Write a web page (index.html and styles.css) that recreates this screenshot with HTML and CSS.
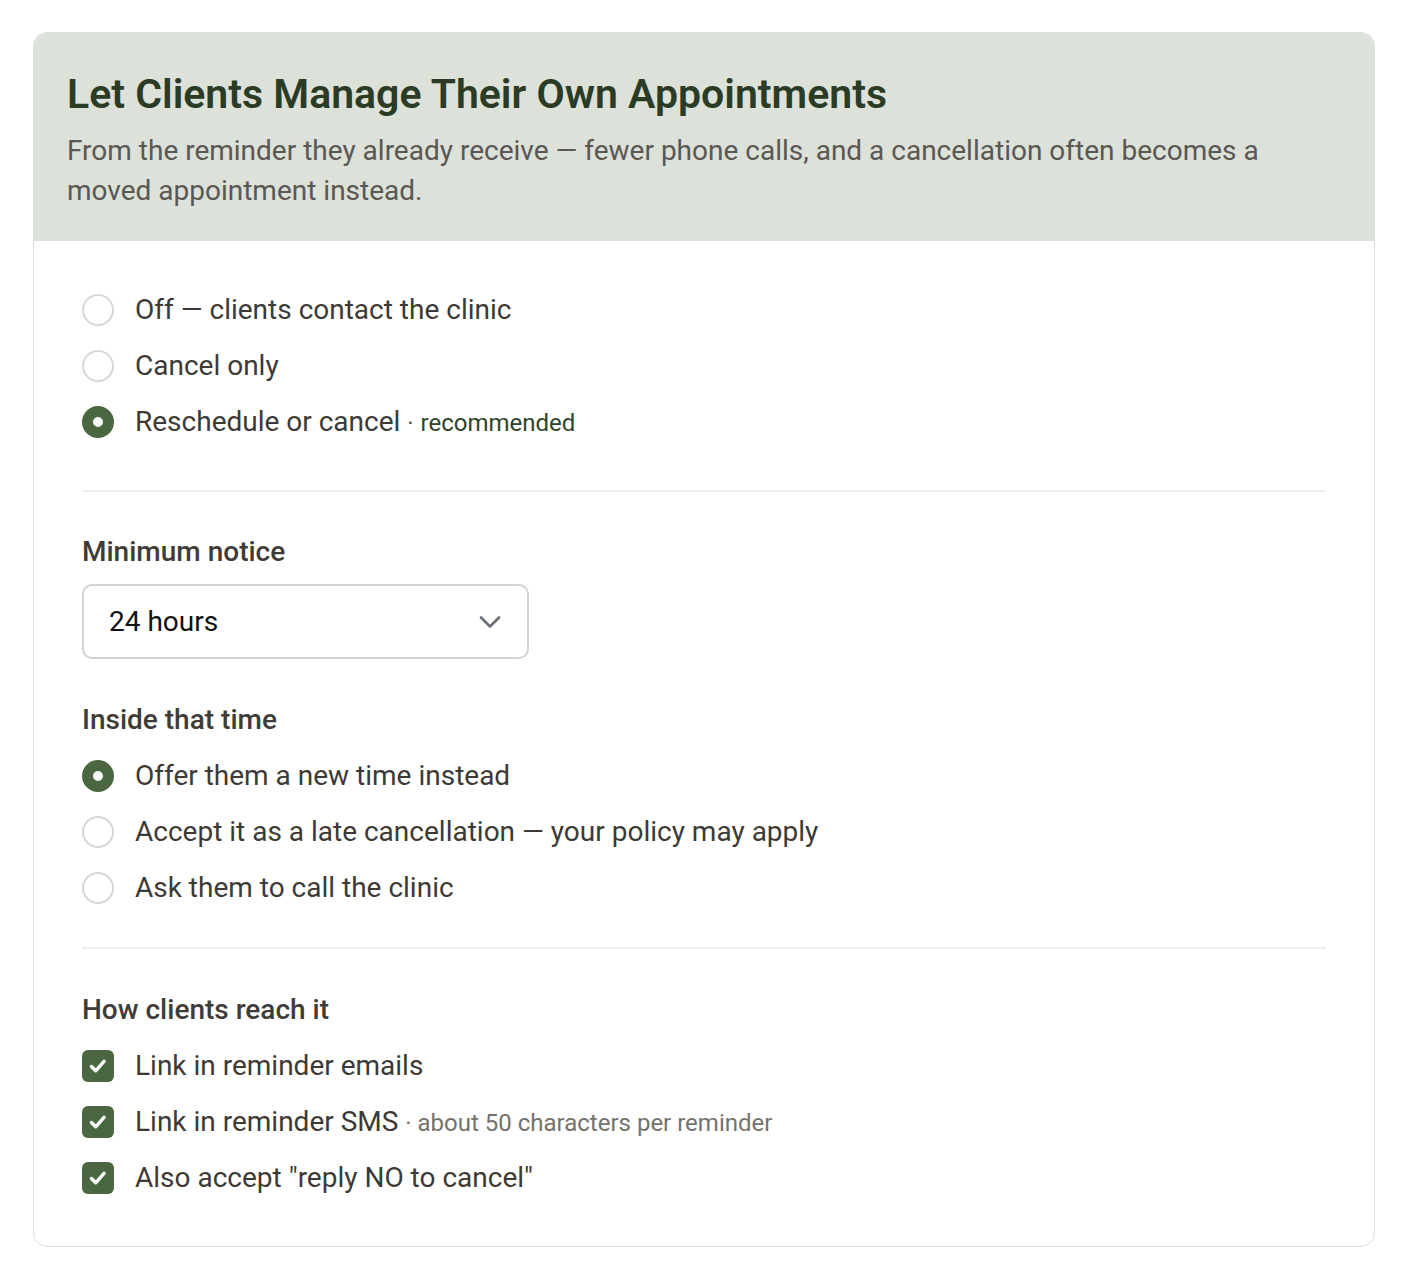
FILE: index.html
```html
<!DOCTYPE html>
<html lang="en">
<head>
<meta charset="utf-8">
<title>Self-service appointments</title>
<link rel="stylesheet" href="styles.css">
</head>
<body>
<div class="card">
  <div class="card-head">
    <h1 class="title">Let Clients Manage Their Own Appointments</h1>
    <p class="subtitle">From the reminder they already receive — fewer phone calls, and a cancellation often becomes a moved appointment instead.</p>
  </div>
  <div class="card-body">
    <div class="group group-first">
      <div class="row"><span class="radio"></span><span class="label">Off — clients contact the clinic</span></div>
      <div class="row"><span class="radio"></span><span class="label">Cancel only</span></div>
      <div class="row"><span class="radio checked"></span><span class="label">Reschedule or cancel <span class="sep">·</span> <span class="rec">recommended</span></span></div>
    </div>
    <hr class="divider divider-a">
    <div class="field-label">Minimum notice</div>
    <div class="select">
      <span class="select-value">24 hours</span>
      <svg class="chevron" width="24" height="24" viewBox="0 0 24 24" fill="none" stroke="#6b7079" stroke-width="2.6" stroke-linecap="round" stroke-linejoin="round"><path d="M3 7.5l9 9 9-9"/></svg>
    </div>
    <div class="field-label field-label-2">Inside that time</div>
    <div class="group">
      <div class="row"><span class="radio checked"></span><span class="label">Offer them a new time instead</span></div>
      <div class="row"><span class="radio"></span><span class="label">Accept it as a late cancellation — your policy may apply</span></div>
      <div class="row"><span class="radio"></span><span class="label">Ask them to call the clinic</span></div>
    </div>
    <hr class="divider divider-b">
    <div class="field-label">How clients reach it</div>
    <div class="group">
      <div class="row"><span class="check"><svg width="32" height="32" viewBox="0 0 32 32" fill="none" stroke="#fff" stroke-width="3.4" stroke-linecap="round" stroke-linejoin="round"><path d="M9.5 16.5l4.2 4.3 8.5-9.6"/></svg></span><span class="label">Link in reminder emails</span></div>
      <div class="row"><span class="check"><svg width="32" height="32" viewBox="0 0 32 32" fill="none" stroke="#fff" stroke-width="3.4" stroke-linecap="round" stroke-linejoin="round"><path d="M9.5 16.5l4.2 4.3 8.5-9.6"/></svg></span><span class="label">Link in reminder SMS <span class="note">· about 50 characters per reminder</span></span></div>
      <div class="row"><span class="check"><svg width="32" height="32" viewBox="0 0 32 32" fill="none" stroke="#fff" stroke-width="3.4" stroke-linecap="round" stroke-linejoin="round"><path d="M9.5 16.5l4.2 4.3 8.5-9.6"/></svg></span><span class="label">Also accept "reply NO to cancel"</span></div>
    </div>
  </div>
</div>
</body>
</html>
```
FILE: styles.css
```css
* { box-sizing: border-box; }
html, body { margin: 0; padding: 0; background: #ffffff; }
body {
  font-family: Roboto, "Liberation Sans", Arial, sans-serif;
  padding: 32px 33px;
  color: #3d3a36;
}
.card {
  border: 1px solid #dcdcd9;
  border-radius: 14px;
  overflow: hidden;
  background: #fff;
}
.card-head {
  background: #dce1da;
  padding: 37px 33px 30px;
}
.title {
  margin: 0;
  font-size: 41px;
  line-height: 48px;
  font-weight: 600;
  color: #2b3b24;
}
.subtitle {
  margin: 13px 0 0;
  font-size: 28px;
  line-height: 40px;
  color: #5b5752;
}
.card-body {
  padding: 41px 48px 40px;
}
.group { display: flex; flex-direction: column; }
.row {
  display: flex;
  align-items: center;
  gap: 21px;
  height: 56px;
}
.label {
  font-size: 28px;
  line-height: 36px;
  color: #3d3a36;
}
.radio {
  flex: none;
  width: 32px;
  height: 32px;
  border-radius: 50%;
  border: 2px solid #d8d5d2;
  background: #fff;
}
.radio.checked {
  border: 11px solid #4a6741;
  background: #fff;
}
.sep { font-size: 24px; color: #55524d; }
.rec { font-size: 24px; color: #2f4428; }
.note { font-size: 24px; color: #75716c; }
.check {
  flex: none;
  width: 32px;
  height: 32px;
  border-radius: 6px;
  background: #4a6741;
  display: flex;
}
.divider {
  border: 0;
  height: 2px;
  background: #eeeeec;
  margin: 0;
}
.divider-a { margin: 40px 0 42px; }
.divider-b { margin: 31px 0 43px; }
.field-label {
  font-size: 28px;
  line-height: 36px;
  font-weight: 500;
  color: #3f3c38;
  margin-bottom: 10px;
}
.field-label-2 { margin-top: 43px; }
.select {
  width: 447px;
  height: 75px;
  border: 2px solid #d4d2cf;
  border-radius: 10px;
  display: flex;
  align-items: center;
  justify-content: space-between;
  padding: 0 25px 0 25px;
  margin-top: 4px;
}
.field-label + .select { margin-top: 14px; }
.select-value { font-size: 28px; color: #111; }
.chevron { display: block; }
```
